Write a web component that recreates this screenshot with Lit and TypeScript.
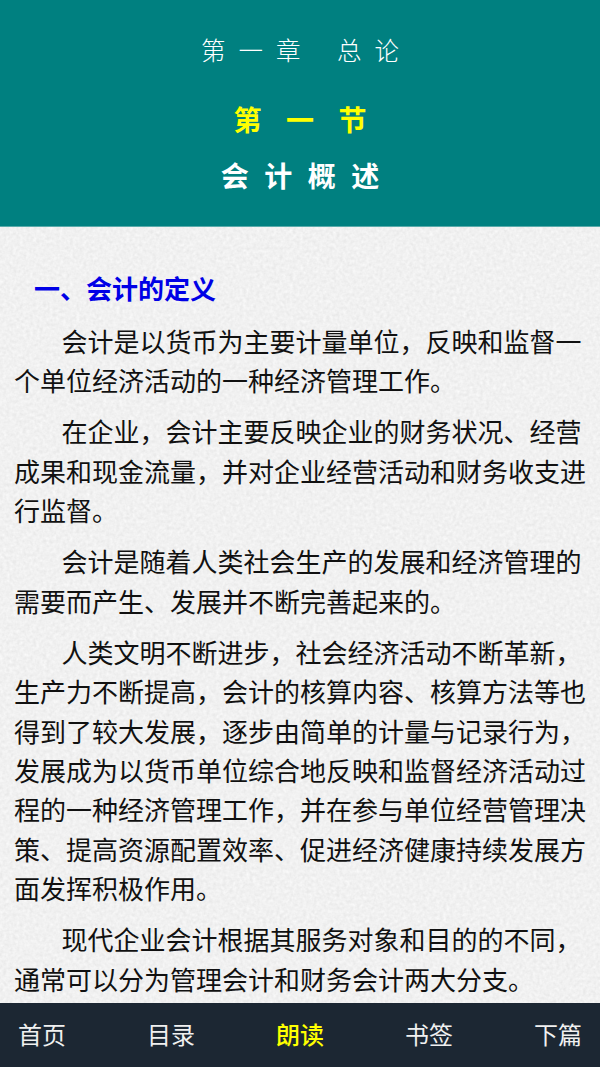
import { LitElement, html, css } from "lit";
import { customElement } from "lit/decorators.js";

const PARAS = [
  "会计是以货币为主要计量单位，反映和监督一个单位经济活动的一种经济管理工作。",
  "在企业，会计主要反映企业的财务状况、经营成果和现金流量，并对企业经营活动和财务收支进行监督。",
  "会计是随着人类社会生产的发展和经济管理的需要而产生、发展并不断完善起来的。",
  "人类文明不断进步，社会经济活动不断革新，生产力不断提高，会计的核算内容、核算方法等也得到了较大发展，逐步由简单的计量与记录行为，发展成为以货币单位综合地反映和监督经济活动过程的一种经济管理工作，并在参与单位经营管理决策、提高资源配置效率、促进经济健康持续发展方面发挥积极作用。",
  "现代企业会计根据其服务对象和目的的不同，通常可以分为管理会计和财务会计两大分支。",
];
const NAV = ["首页", "目录", "朗读", "书签", "下篇"];

@customElement("app-root")
export class AppRoot extends LitElement {
  static styles = css`
    :host {
      display: flex;
      flex-direction: column;
      width: 600px;
      height: 1067px;
      overflow: hidden;
      font-family: "Noto Sans CJK SC", sans-serif;
    }
    .head {
      flex: none;
      height: 227px;
      background: #008080;
      border-bottom: 1px solid #5aabab;
      box-sizing: border-box;
      display: flex;
      flex-direction: column;
      align-items: center;
      color: #fff;
    }
    .chapter {
      margin-top: 29px;
      height: 42px;
      line-height: 42px;
      font-size: 24.5px;
      font-weight: 300;
      letter-spacing: 13px;
      margin-right: -13px;
      display: flex;
      gap: 23.5px;
    }
    .section {
      margin-top: 27px;
      height: 42px;
      line-height: 42px;
      font-size: 28px;
      font-weight: 700;
      color: #ffff00;
      letter-spacing: 24.5px;
      margin-right: -24.5px;
    }
    .title {
      margin-top: 14px;
      height: 42px;
      line-height: 42px;
      font-size: 28px;
      font-weight: 700;
      letter-spacing: 15.5px;
      margin-right: -15.5px;
    }
    .body {
      flex: 1;
      min-height: 0;
      position: relative;
      background: #e9e9e9;
      padding: 41px 14px 0 14px;
      color: #111;
      overflow: hidden;
    }
    .noise {
      position: absolute;
      inset: 0;
      width: 100%;
      height: 100%;
    }
    .content { position: relative; }
    h2 {
      margin: 0 0 13px 20px;
      font-size: 26px;
      line-height: 40px;
      font-weight: 700;
      color: #0000e6;
    }
    p {
      margin: 0 0 11.5px;
      font-size: 26px;
      line-height: 39.45px;
      text-indent: 47.5px;
    }
    nav {
      flex: none;
      height: 64px;
      background: #1c2733;
      display: flex;
      justify-content: space-between;
      padding: 13px 18px 0;
      box-sizing: border-box;
      line-height: 36px;
      color: #f0f0f0;
      font-size: 24px;
    }
    nav .on { color: #ffff00; font-weight: 500; }
  `;

  render() {
    return html`
      <header class="head">
        <div class="chapter"><span>第一章</span><span>总论</span></div>
        <div class="section">第一节</div>
        <div class="title">会计概述</div>
      </header>
      <main class="body">
        <svg class="noise" aria-hidden="true">
          <filter id="n" x="0" y="0" width="100%" height="100%">
            <feTurbulence type="fractalNoise" baseFrequency="0.3" numOctaves="2" seed="4" />
            <feColorMatrix type="matrix" values="0 0 0 0 1  0 0 0 0 1  0 0 0 0 1  0.7 0.7 0 0 -0.35" />
          </filter>
          <rect width="100%" height="100%" filter="url(#n)" />
        </svg>
        <div class="content">
          <h2>一、会计的定义</h2>
          ${PARAS.map((p) => html`<p>${p}</p>`)}
        </div>
      </main>
      <nav>${NAV.map((n, i) => html`<span class=${i === 2 ? "on" : ""}>${n}</span>`)}</nav>
    `;
  }
}
